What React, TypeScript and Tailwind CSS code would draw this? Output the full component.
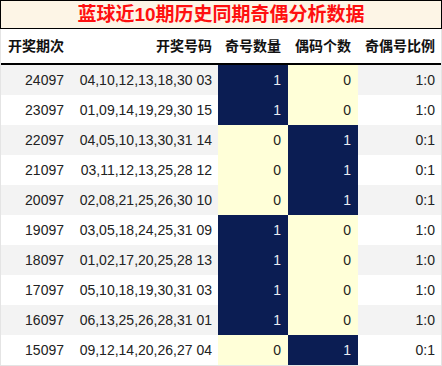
import React from 'react';

type Row = { issue: string; nums: string; odd: number; even: number };

const rows: Row[] = [
  { issue: '24097', nums: '04,10,12,13,18,30 03', odd: 1, even: 0 },
  { issue: '23097', nums: '01,09,14,19,29,30 15', odd: 1, even: 0 },
  { issue: '22097', nums: '04,05,10,13,30,31 14', odd: 0, even: 1 },
  { issue: '21097', nums: '03,11,12,13,25,28 12', odd: 0, even: 1 },
  { issue: '20097', nums: '02,08,21,25,26,30 10', odd: 0, even: 1 },
  { issue: '19097', nums: '03,05,18,24,25,31 09', odd: 1, even: 0 },
  { issue: '18097', nums: '01,02,17,20,25,28 13', odd: 1, even: 0 },
  { issue: '17097', nums: '05,10,18,19,30,31 03', odd: 1, even: 0 },
  { issue: '16097', nums: '06,13,25,26,28,31 01', odd: 1, even: 0 },
  { issue: '15097', nums: '09,12,14,20,26,27 04', odd: 0, even: 1 },
];

const cols = 'grid grid-cols-[69px_148px_70px_70px_83px]';

function countCell(v: number) {
  return v === 1
    ? 'bg-[#0b1d53] text-[#e8ecf4]'
    : 'bg-[#ffffd8] text-[#222]';
}

export default function App() {
  return (
    <div className="w-[442px] h-[366px] bg-white font-['Liberation_Sans','Noto_Sans_CJK_SC',sans-serif]">
      <div className="h-[29px] border border-black bg-[#fdf5e6] flex items-center justify-center">
        <span className="text-[19px] font-bold text-[#ff1010] leading-none">蓝球近10期历史同期奇偶分析数据</span>
      </div>
      <div className="border-x border-b border-[#e4e4e4]">
        <div className={`${cols} h-[36px] border-b-2 border-black text-[14px] font-bold text-[#111] items-center`}>
          <div className="pl-[7px]">开奖期次</div>
          <div className="text-right pr-[6px]">开奖号码</div>
          <div className="text-right pr-[7px]">奇号数量</div>
          <div className="text-right pr-[7px]">偶码个数</div>
          <div className="text-right pr-[6px]">奇偶号比例</div>
        </div>
        {rows.map((r, i) => (
          <div
            key={r.issue}
            className={`${cols} h-[30px] text-[14px] text-[#222] ${i % 2 === 0 ? 'bg-[#f3f3f3]' : 'bg-white'}`}
          >
            <div className="flex items-center justify-end pr-[6px]">{r.issue}</div>
            <div className="flex items-center justify-end pr-[6px]">{r.nums}</div>
            <div className={`flex items-center justify-end pr-[7px] ${countCell(r.odd)}`}>{r.odd}</div>
            <div className={`flex items-center justify-end pr-[7px] ${countCell(r.even)}`}>{r.even}</div>
            <div className="flex items-center justify-end pr-[6px]">{`${r.odd}:${r.even}`}</div>
          </div>
        ))}
      </div>
    </div>
  );
}
